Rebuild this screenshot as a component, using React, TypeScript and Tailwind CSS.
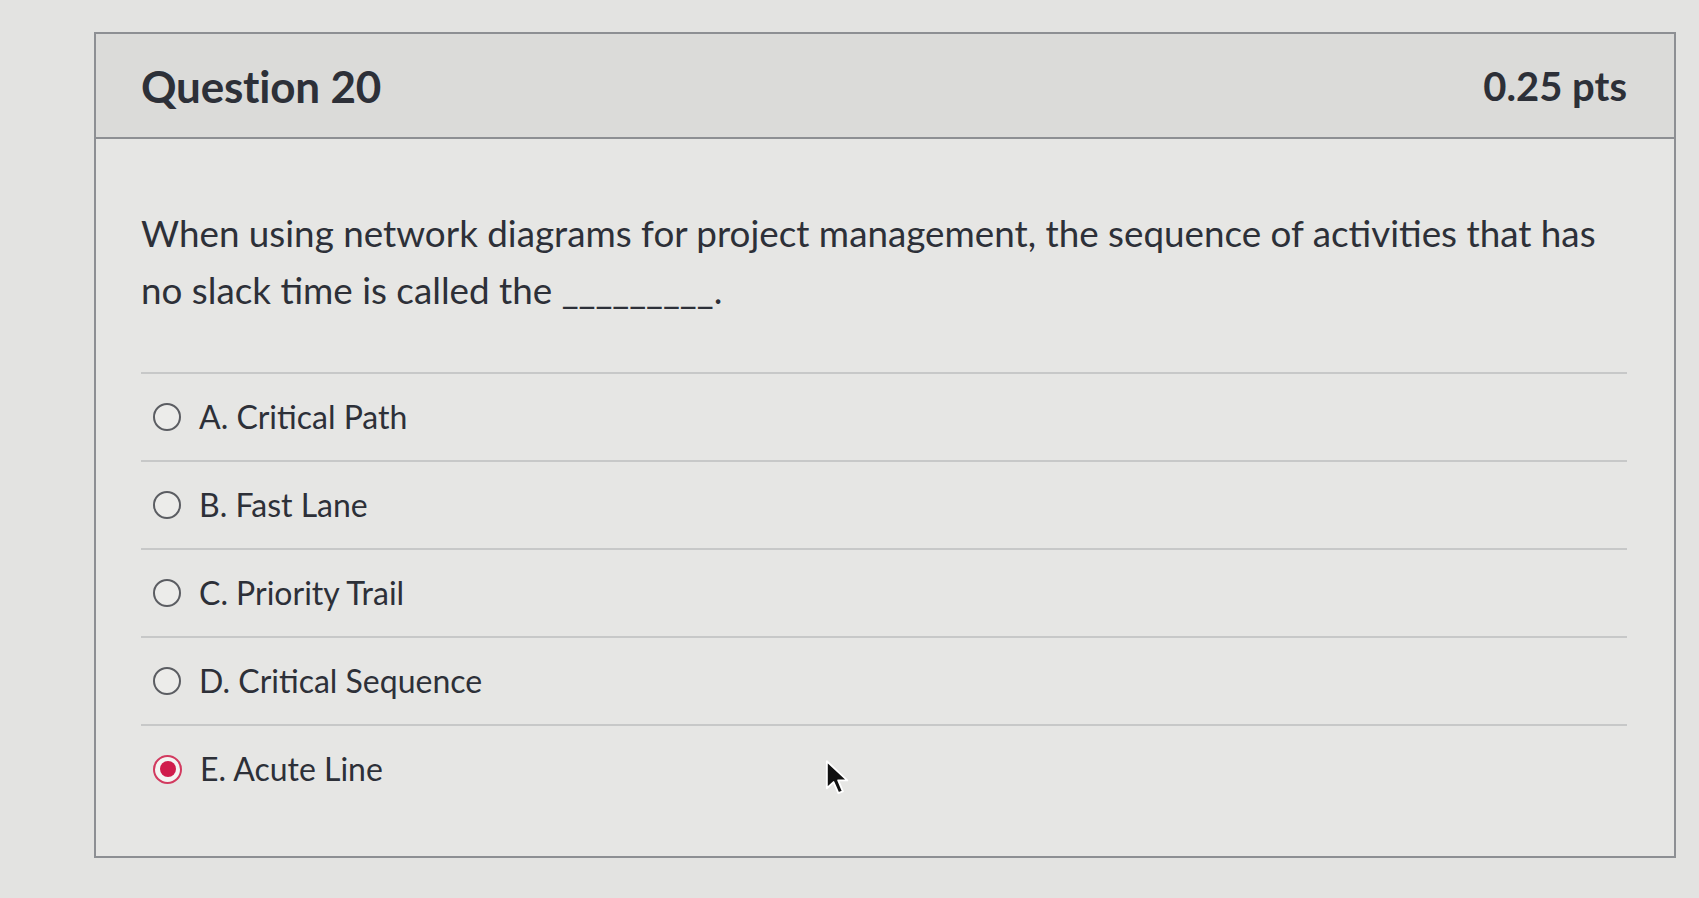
const answers = [
  { id: 'a', label: 'A. Critical Path' },
  { id: 'b', label: 'B. Fast Lane' },
  { id: 'c', label: 'C. Priority Trail' },
  { id: 'd', label: 'D. Critical Sequence' },
  { id: 'e', label: 'E. Acute Line' },
];

function Radio({ checked }: { checked: boolean }) {
  if (checked) {
    return (
      <span className="flex h-[29px] w-[29px] items-center justify-center rounded-full border-2 border-[#d23a5f] bg-[#f4f4f2]">
        <span className="h-[16px] w-[16px] rounded-full bg-[#d01c4b]" />
      </span>
    );
  }
  return <span className="block h-[28px] w-[28px] rounded-full border-2 border-[#5b5d62] bg-[#ececea]" />;
}

// mouse pointer sitting over the page
function Cursor() {
  return (
    <svg className="absolute left-[825px] top-[759px]" width="26" height="38" viewBox="0 0 14 20">
      <path
        d="M1 1 L1 15.5 L4.6 12.2 L7.2 18.2 L9.6 17.2 L7.1 11.3 L12 11.3 Z"
        fill="#111"
        stroke="#fff"
        strokeWidth="1"
        strokeLinejoin="round"
      />
    </svg>
  );
}

export default function App() {
  const selected = 'e';

  return (
    <div className="relative min-h-[898px] overflow-hidden bg-[#e3e3e1] pt-[32px] pl-[94px] font-['Lato','Noto_Sans',sans-serif] text-[#2d3038]">
      <div className="w-[1582px] border-2 border-[#8d8f93] bg-[#e6e6e4]">
        <div className="flex h-[105px] items-center justify-between border-b-2 border-[#8d8f93] bg-[#dbdbd9] pl-[45px] pr-[47px]">
          <h2 className="text-[44px] font-bold tracking-[-0.2px]">Question 20</h2>
          <span className="text-[40px] font-bold">0.25 pts</span>
        </div>

        <div className="pl-[45px] pr-[47px] pt-[66px] pb-[44px]">
          <p className="text-[36.8px] leading-[57px]">
            When using network diagrams for project management, the sequence of activities that has no slack time is
            called the _________.
          </p>

          <div className="mt-[53px]">
            {answers.map((a) => (
              <label
                key={a.id}
                className="flex h-[88px] items-center gap-[18px] border-t-2 border-[#c7c8c8] pl-[12px] text-[32px]"
              >
                <Radio checked={a.id === selected} />
                <span>{a.label}</span>
              </label>
            ))}
          </div>
        </div>
      </div>
      <Cursor />
    </div>
  );
}
